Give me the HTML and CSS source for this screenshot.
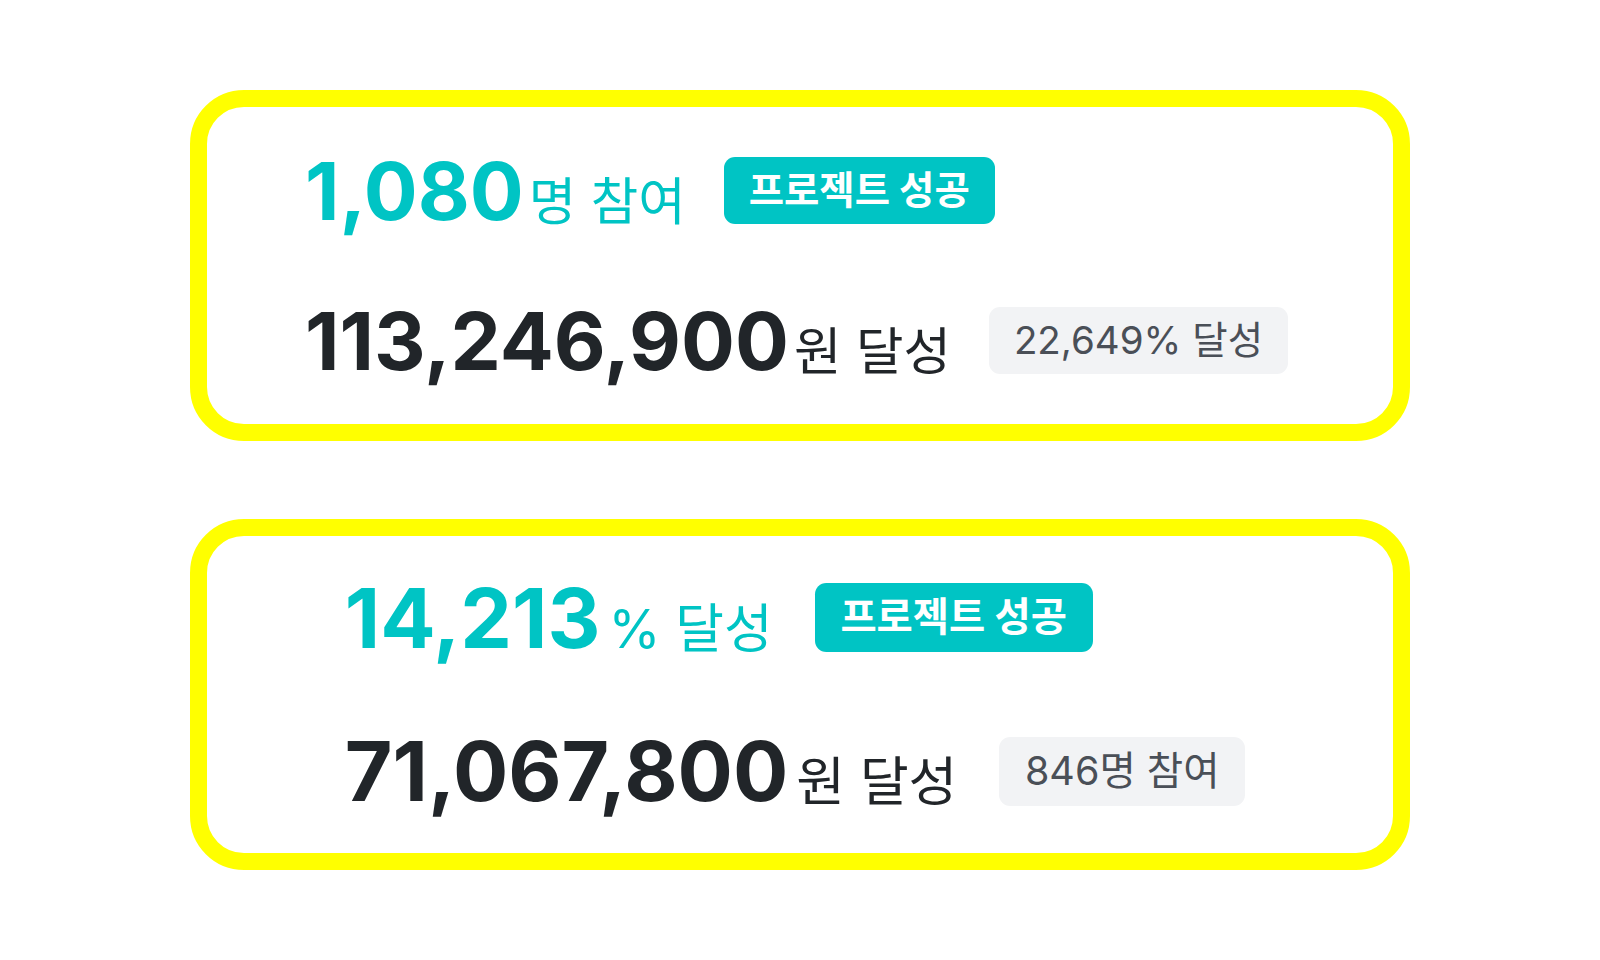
FILE: index.html
```html
<!DOCTYPE html>
<html lang="ko">
<head>
<meta charset="utf-8">
<title>프로젝트 성공</title>
<link rel="stylesheet" href="styles.css">
</head>
<body>
<main class="page">
  <section class="card card-first">
    <div class="content">
      <div class="row">
        <div class="stat stat-accent">
          <span class="num">1,080</span><span class="unit">명 참여</span>
        </div>
        <span class="badge badge-success">프로젝트 성공</span>
      </div>
      <div class="row">
        <div class="stat">
          <span class="num">113,246,900</span><span class="unit">원 달성</span>
        </div>
        <span class="badge badge-muted">22,649% 달성</span>
      </div>
    </div>
  </section>
  <section class="card card-second">
    <div class="content">
      <div class="row">
        <div class="stat stat-accent">
          <span class="num">14,213</span><span class="unit">% 달성</span>
        </div>
        <span class="badge badge-success">프로젝트 성공</span>
      </div>
      <div class="row">
        <div class="stat">
          <span class="num">71,067,800</span><span class="unit">원 달성</span>
        </div>
        <span class="badge badge-muted">846명 참여</span>
      </div>
    </div>
  </section>
</main>
</body>
</html>
```
FILE: styles.css
```css
* {
  box-sizing: border-box;
}

html, body {
  margin: 0;
  padding: 0;
  background: #ffffff;
}

body {
  font-family: "Inter", "Noto Sans CJK KR", sans-serif;
  color: #212529;
}

.page {
  height: 960px;
  display: flex;
  flex-direction: column;
  align-items: center;
  justify-content: center;
  gap: 78px;
}

.card {
  --s: 1;
  --unit-gap: 5px;
  --badge-gap: 38px;
  width: 1220px;
  height: 351px;
  border: 17px solid #ffff00;
  border-radius: 54px;
  padding-right: 7px;
  display: flex;
  align-items: center;
  justify-content: center;
}

.card-second {
  --s: 1.026;
  --unit-gap: 8px;
  --badge-gap: 42px;
  padding-right: 10px;
}

.content {
  display: flex;
  flex-direction: column;
  align-items: flex-start;
  gap: calc(83px * var(--s));
}

.row {
  display: flex;
  align-items: center;
  height: calc(67px * var(--s));
}

.stat {
  display: flex;
  align-items: baseline;
  color: #212529;
}

.stat-accent {
  color: #00c4c4;
}

.num {
  font-family: "Inter", sans-serif;
  font-weight: 700;
  font-size: calc(80px * var(--s));
  line-height: 1;
}

.unit {
  font-size: calc(51.6px * var(--s));
  font-weight: 400;
  line-height: 1;
  margin-left: var(--unit-gap);
}

.badge {
  margin-left: var(--badge-gap);
  height: calc(67px * var(--s));
  padding: 0 calc(25px * var(--s));
  border-radius: calc(11px * var(--s));
  display: flex;
  align-items: center;
  line-height: 1;
}

.badge-success {
  background: #00c4c4;
  color: #ffffff;
  font-weight: 700;
  font-size: calc(38.4px * var(--s));
}

.badge-muted {
  background: #f2f3f5;
  color: #4a4f57;
  font-weight: 400;
  font-size: calc(38.5px * var(--s));
}
```
